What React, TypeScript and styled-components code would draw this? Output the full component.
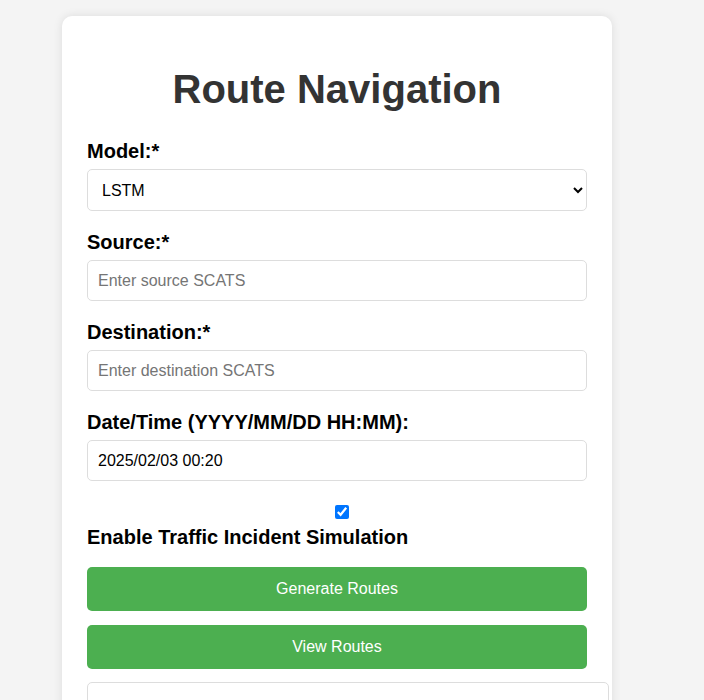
import React from 'react';
import styled, { createGlobalStyle } from 'styled-components';

const GlobalStyle = createGlobalStyle`
  body {
    margin: 0;
    background-color: #f4f4f4;
    font-family: "Liberation Sans", Arial, sans-serif;
  }
`;

const Page = styled.div`
  padding: 16px 0 0 62px;
`;

const Card = styled.div`
  width: 500px;
  padding: 25px;
  background-color: #ffffff;
  border-radius: 10px;
  box-shadow: 0 0 10px rgba(0, 0, 0, 0.1);
`;

const Title = styled.h1`
  font-size: 40px;
  margin: 26px 0 28px;
  text-align: center;
  color: #333333;
`;

const Label = styled.label`
  display: block;
  font-size: 20px;
  font-weight: bold;
  line-height: 23px;
  color: #000000;
  margin-bottom: 6px;
`;

const Select = styled.select`
  display: block;
  width: 100%;
  height: 42px;
  padding: 0 10px;
  margin-bottom: 20px;
  font-family: inherit;
  font-size: 16px;
  color: #000000;
  background-color: #ffffff;
  border: 1px solid #dddddd;
  border-radius: 5px;
  box-sizing: border-box;
`;

const Input = styled.input`
  display: block;
  width: 100%;
  height: 41px;
  padding: 0 10px;
  margin: 0 0 20px;
  font-family: inherit;
  font-size: 16px;
  color: #000000;
  border: 1px solid #dddddd;
  border-radius: 5px;
  box-sizing: border-box;
  outline: none;

  ::placeholder {
    color: #757575;
  }
`;

const CheckRow = styled.div`
  display: flex;
  justify-content: center;
  align-items: center;
  height: 22px;
  padding-left: 10px;
`;

const Check = styled.input`
  width: 14px;
  height: 14px;
  margin: 0;
  accent-color: #0075ff;
`;

const CheckLabel = styled(Label)`
  margin: 3px 0 18px;
`;

const Button = styled.button<{ last?: boolean }>`
  display: block;
  width: 100%;
  height: 44px;
  padding: 0 12px;
  margin-bottom: ${(p) => (p.last ? '13px' : '14px')};
  font-family: inherit;
  font-size: 16px;
  color: #ffffff;
  background-color: #4caf50;
  border: none;
  border-radius: 5px;
  cursor: pointer;
`;

const Result = styled.div`
  width: 500px;
  min-height: 80px;
  padding: 10px;
  border: 1px solid #dddddd;
  border-radius: 5px;
  background-color: #ffffff;
`;

const App = () => {
  return (
    <>
      <GlobalStyle />
      <Page>
        <Card>
          <Title>Route Navigation</Title>
          <Label>Model:*</Label>
          <Select defaultValue="LSTM">
            <option value="LSTM">LSTM</option>
            <option value="GRU">GRU</option>
          </Select>
          <Label>Source:*</Label>
          <Input placeholder="Enter source SCATS" />
          <Label>Destination:*</Label>
          <Input placeholder="Enter destination SCATS" />
          <Label>Date/Time (YYYY/MM/DD HH:MM):</Label>
          <Input defaultValue="2025/02/03 00:20" />
          <CheckRow>
            <Check type="checkbox" defaultChecked />
          </CheckRow>
          <CheckLabel>Enable Traffic Incident Simulation</CheckLabel>
          <Button>Generate Routes</Button>
          <Button last>View Routes</Button>
          <Result />
        </Card>
      </Page>
    </>
  );
};

export default App;
